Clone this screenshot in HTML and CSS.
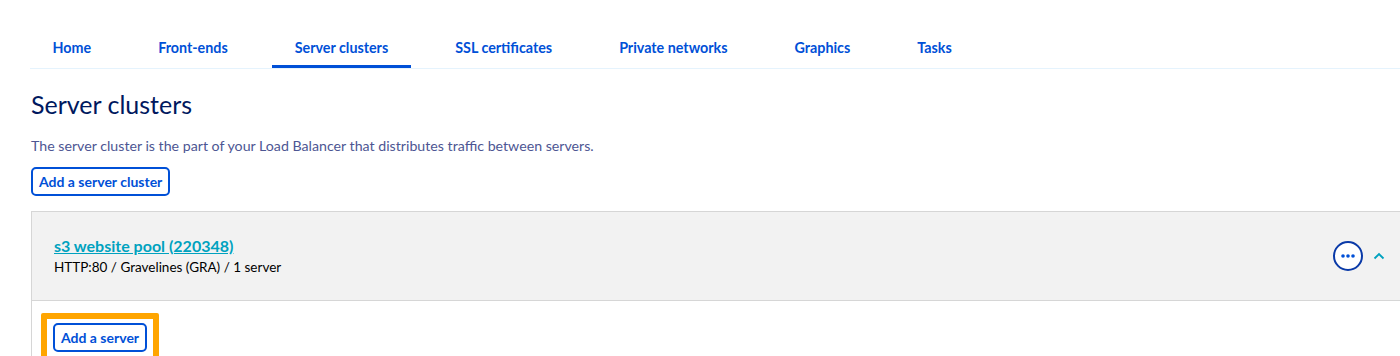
FILE: index.html
```html
<!DOCTYPE html>
<html lang="en">
<head>
<meta charset="utf-8">
<title>Server clusters</title>
<link rel="stylesheet" href="styles.css">
</head>
<body>
<div class="page">
  <nav class="tabs">
    <a class="tab">Home</a>
    <a class="tab">Front-ends</a>
    <a class="tab active">Server clusters</a>
    <a class="tab">SSL certificates</a>
    <a class="tab">Private networks</a>
    <a class="tab">Graphics</a>
    <a class="tab">Tasks</a>
  </nav>
  <h1 class="title">Server clusters</h1>
  <p class="intro">The server cluster is the part of your Load Balancer that distributes traffic between servers.</p>
  <button class="btn">Add a server cluster</button>
  <section class="panel">
    <div class="panel-head">
      <div class="panel-info">
        <a class="pool-link">s3 website pool (220348)</a>
        <div class="pool-meta">HTTP:80 / Gravelines (GRA) / 1 server</div>
      </div>
      <div class="panel-actions">
        <button class="more" aria-label="Actions">
          <svg width="14" height="4" viewBox="0 0 14 4"><circle cx="2" cy="2" r="1.8" fill="#0050d7"/><circle cx="7" cy="2" r="1.8" fill="#0050d7"/><circle cx="12" cy="2" r="1.8" fill="#0050d7"/></svg>
        </button>
        <svg class="chevron" width="12" height="8" viewBox="0 0 12 8"><path d="M1.5 6.5 L6 2 L10.5 6.5" fill="none" stroke="#00a2bf" stroke-width="1.8"/></svg>
      </div>
    </div>
    <div class="panel-body">
      <div class="highlight">
        <button class="btn">Add a server</button>
      </div>
    </div>
  </section>
</div>
</body>
</html>
```
FILE: styles.css
```css
html, body {
  margin: 0;
  padding: 0;
  background: #fff;
  overflow: hidden;
}
body {
  font-family: "Lato", "Liberation Sans", sans-serif;
  width: 1400px;
  height: 356px;
}
.page {
  padding: 28px 0 0 30px;
}
.tabs {
  display: flex;
  gap: 22px;
  border-bottom: 1px solid #e5f3fd;
  margin-right: -10px;
}
.tab {
  display: block;
  padding: 10px 22.5px 7px;
  line-height: 20px;
  font-size: 14.3px;
  font-weight: 700;
  color: #0050d7;
  border-bottom: 3px solid transparent;
}
.tab.active {
  border-bottom-color: #0050d7;
}
.title {
  margin: 19px 0 0 1px;
  font-size: 25px;
  line-height: 32px;
  font-weight: 400;
  color: #00185e;
}
.intro {
  margin: 16px 0 0 1px;
  font-size: 14.2px;
  line-height: 20px;
  color: #4d5693;
}
.btn {
  font-family: inherit;
  font-size: 14px;
  font-weight: 700;
  color: #0050d7;
  background: #fff;
  border: 2px solid #0050d7;
  border-radius: 5px;
  height: 29px;
  padding: 0 6px;
  line-height: 25px;
  cursor: pointer;
}
.page > .btn {
  margin: 11px 0 0 1px;
  display: block;
}
.panel {
  margin: 15px 0 0 1px;
  width: 1390px;
  border: 1px solid #d6d6d6;
  border-right: none;
}
.panel-head {
  display: flex;
  align-items: center;
  justify-content: space-between;
  background: #f2f2f2;
  border-bottom: 1px solid #d6d6d6;
  padding: 24px 37px 24px 22px;
  height: 40px;
}
.panel-info {
  display: flex;
  flex-direction: column;
}
.pool-link {
  font-size: 16px;
  line-height: 20px;
  font-weight: 700;
  color: #00a2bf;
  text-decoration: underline;
}
.pool-meta {
  font-size: 13.5px;
  line-height: 20px;
  color: #000;
  margin-top: 1px;
}
.panel-actions {
  display: flex;
  align-items: center;
  gap: 10px;
}
.more {
  width: 30px;
  height: 30px;
  border-radius: 50%;
  border: 2px solid #0a3aa8;
  background: #fff;
  display: flex;
  align-items: center;
  justify-content: center;
  padding: 0;
}
.chevron {
  display: block;
}
.panel-body {
  padding: 12px 9px 20px;
}
.highlight {
  display: inline-block;
  border: 6px solid #ffa500;
  border-radius: 2px;
  padding: 4px 6px;
  background: #fff;
}
.highlight .btn {
  display: block;
}
```
